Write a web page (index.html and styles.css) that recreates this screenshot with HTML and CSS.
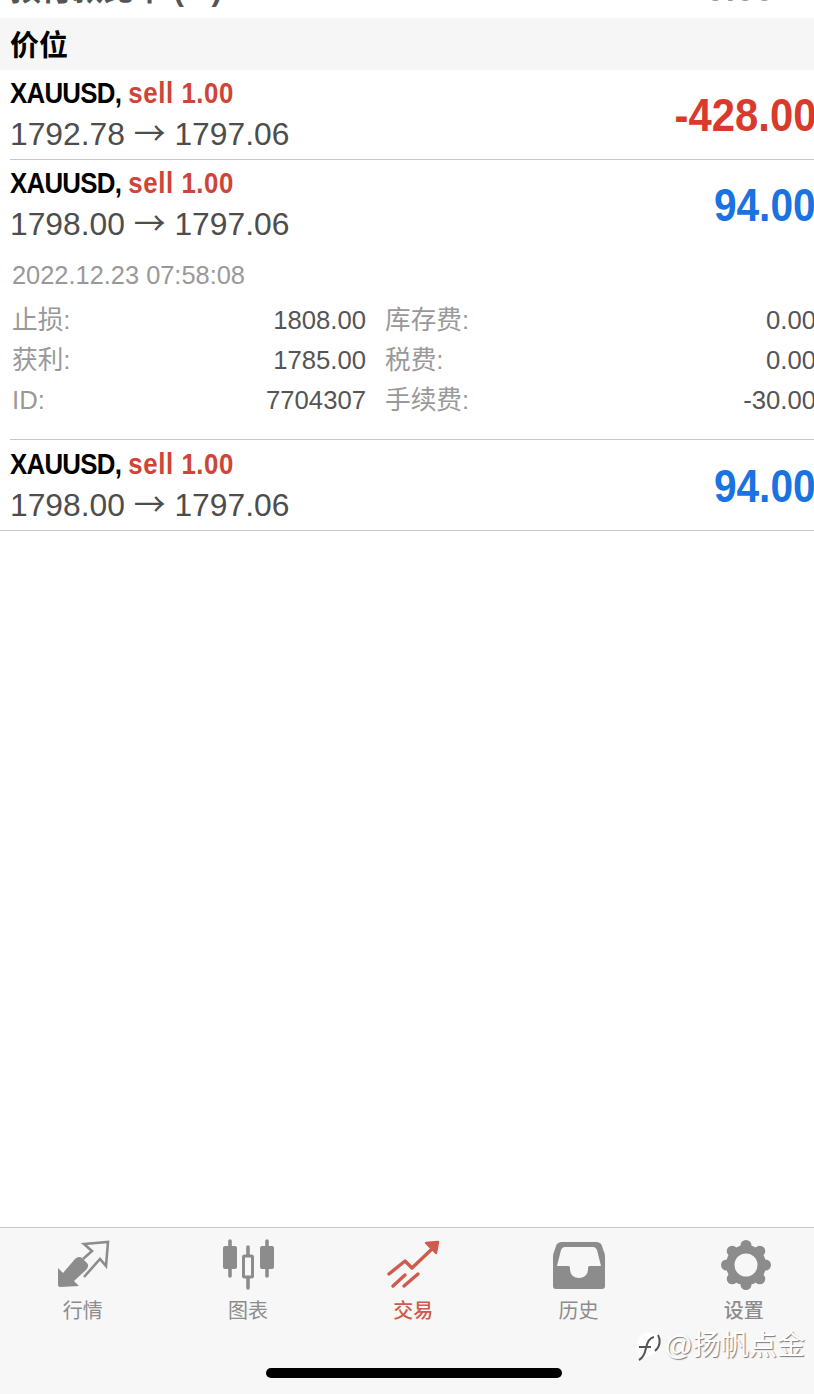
FILE: index.html
```html
<!DOCTYPE html>
<html lang="zh-CN">
<head>
    <meta charset="UTF-8">
    <meta name="viewport" content="width=device-width, initial-scale=1.0">
    <title>交易</title>
    <link rel="stylesheet" href="styles.css">
</head>
<body>
    <div class="page">
        <div class="content">
            <!-- Summary row, cut off by the top of the screen -->
            <div class="summary">
                <div class="summary-row">
                    <span>预付款比率 (%)</span>
                    <span class="summary-value">0.00</span>
                </div>
            </div>

            <div class="section-title">价位</div>

            <div class="position">
                <div class="position-main">
                    <div>
                        <div class="position-title"><span class="symbol">XAUUSD,</span> <span class="side">sell 1.00</span></div>
                        <div class="position-price">1792.78 <span class="arrow">→</span> 1797.06</div>
                    </div>
                    <div class="profit loss">-428.00</div>
                </div>
            </div>

            <div class="position">
                <div class="position-main">
                    <div>
                        <div class="position-title"><span class="symbol">XAUUSD,</span> <span class="side">sell 1.00</span></div>
                        <div class="position-price">1798.00 <span class="arrow">→</span> 1797.06</div>
                    </div>
                    <div class="profit gain">94.00</div>
                </div>
                <div class="position-details">
                    <div class="position-date">2022.12.23 07:58:08</div>
                    <div class="details-grid">
                        <span class="label">止损:</span><span class="value">1808.00</span>
                        <span class="label second">库存费:</span><span class="value">0.00</span>
                        <span class="label">获利:</span><span class="value">1785.00</span>
                        <span class="label second">税费:</span><span class="value">0.00</span>
                        <span class="label">ID:</span><span class="value">7704307</span>
                        <span class="label second">手续费:</span><span class="value">-30.00</span>
                    </div>
                </div>
            </div>

            <div class="position last">
                <div class="position-main">
                    <div>
                        <div class="position-title"><span class="symbol">XAUUSD,</span> <span class="side">sell 1.00</span></div>
                        <div class="position-price">1798.00 <span class="arrow">→</span> 1797.06</div>
                    </div>
                    <div class="profit gain">94.00</div>
                </div>
            </div>
        </div>

        <!-- Bottom tab bar -->
        <div class="tabbar">
            <div class="tab">
                <svg class="tab-icon" viewBox="0 0 64 56">
                    <path d="M7 32l5 5 12-14c2-2 5-3 7-1l5 5c2 2 1 5-1 7L23 45l5 5-19 1c-1 0-2-1-2-2z" fill="currentColor"/>
                    <path d="M32 23l9-8-8-7 24-2-2 24-6-7-16 18" fill="none" stroke="currentColor" stroke-width="2.600"/>
                </svg>
                <span>行情</span>
            </div>
            <div class="tab">
                <svg class="tab-icon" viewBox="0 0 64 56">
                    <path d="M14 5v35M51 5v35M32 11v41" fill="none" stroke="currentColor" stroke-width="3.600" stroke-linecap="round"/>
                    <rect x="7" y="10" width="14" height="23" rx="2" fill="currentColor"/>
                    <rect x="44" y="10" width="14" height="23" rx="2" fill="currentColor"/>
                    <rect x="27.500" y="20" width="9" height="21" rx="1" fill="#f7f7f7" stroke="currentColor" stroke-width="3"/>
                </svg>
                <span>图表</span>
            </div>
            <div class="tab active">
                <svg class="tab-icon" viewBox="0 0 64 56">
                    <path d="M8 38l16-13 7 7 22-21" fill="none" stroke="currentColor" stroke-width="3.400" stroke-linecap="round" stroke-linejoin="round"/>
                    <path d="M45 7l12-1-2 11z" fill="currentColor" stroke="currentColor" stroke-width="2.400" stroke-linejoin="round"/>
                    <path d="M12 50l12-11M23 50l14-12" fill="none" stroke="currentColor" stroke-width="3.400" stroke-linecap="round"/>
                </svg>
                <span>交易</span>
            </div>
            <div class="tab">
                <svg class="tab-icon" viewBox="0 0 64 56">
                    <path fill-rule="evenodd" d="M15 6h34c3 0 5 1 6 4l2 6c1 2 1 4 1 6v28c0 2-1 3-3 3H9c-2 0-3-1-3-3V22c0-2 0-4 1-6l2-6c1-3 3-4 6-4zM18 11c-2 0-3 1-4 3l-4 16h11c2 0 2 1 2 3 0 6 4 9 9 9s9-3 9-9c0-2 0-3 2-3h11l-4-16c-1-2-2-3-4-3z" fill="currentColor"/>
                </svg>
                <span>历史</span>
            </div>
            <div class="tab">
                <svg class="tab-icon" viewBox="0 0 64 56">
                    <circle cx="34" cy="29" r="15.750" fill="none" stroke="currentColor" stroke-width="8.500"/>
                    <path d="M34 9.500h0M47.800 15.200h0M53.500 29h0M47.800 42.800h0M34 48.500h0M20.200 42.800h0M14.500 29h0M20.200 15.200h0" fill="none" stroke="currentColor" stroke-width="11" stroke-linecap="round"/>
                </svg>
                <span class="tab-strong">设置</span>
            </div>
        </div>

        <div class="home-indicator"></div>

        <div class="watermark">
            <svg class="watermark-icon" viewBox="0 0 26 30">
                <path d="M5 25C0 22 0 14 2 9 4 4 9 1 15 2c7 1 10 6 9 12-1 6-5 9-10 10l-6 4z" fill="#fff"/>
                <path d="M3 29c4-2 6-7 7-12 1-5 3-10 8-11M3 16h12M22 4c3 5 2 12-3 16" fill="none" stroke="#555" stroke-width="2"/>
            </svg>
            <span>@扬帆点金</span>
        </div>
    </div>
</body>
</html>
```

FILE: styles.css
```css
/* Basic Styling */
body {
    margin: 0;
    padding: 0;
    background-color: white;
    font-family: "Liberation Sans", "Noto Sans CJK SC", sans-serif;
}

.page {
    position: relative;
    width: 814px;
    height: 1394px;
    overflow: hidden;
    display: flex;
    flex-direction: column;
}

.content {
    flex: 1;
    margin-right: -2px;
}

.summary {
    height: 18px;
    overflow: hidden;
}

.summary-row {
    display: flex;
    justify-content: space-between;
    margin-top: -28px;
    padding: 0 41px 0 10px;
    font-size: 31px;
    line-height: 36px;
    font-weight: bold;
    color: #555;
}

.summary-value {
    margin-top: 1px;
    letter-spacing: 2px;
    color: #999;
}

.section-title {
    height: 52px;
    padding-left: 10px;
    background-color: #f6f6f6;
    font-size: 29px;
    line-height: 56px;
    font-weight: bold;
    color: black;
}

.position {
    margin-left: 10px;
    border-bottom: 1px solid #c8c8c8;
}

.position.last {
    margin-left: 0;
    padding-left: 10px;
}

.position.last .position-main {
    height: 90px;
}

.position-main {
    display: flex;
    justify-content: space-between;
    align-items: center;
    height: 89px;
}

/* The app uses a condensed bold, so the Arial widths get squeezed */
.position-title {
    font-size: 30px;
    line-height: 40px;
    font-weight: bold;
    color: black;
    white-space: nowrap;
    transform: scaleX(0.86);
    transform-origin: left center;
}

.symbol {
    letter-spacing: -0.83px;
}

.side {
    letter-spacing: 0.67px;
    color: #cf4437;
}

.position-price {
    margin-top: -1px;
    font-size: 31.800px;
    line-height: 44px;
    color: #4d4d4d;
}

.arrow {
    font-family: "Noto Sans CJK SC", sans-serif;
    line-height: 1;
}

.profit {
    font-size: 47px;
    font-weight: bold;
    transform-origin: right center;
}

.loss {
    color: #d93a2b;
    transform: scaleX(0.89);
}

.gain {
    color: #1a73e0;
    transform: scaleX(0.865);
}

.position-details {
    height: 190px;
    padding-left: 2px;
}

.position-date {
    font-size: 25.400px;
    line-height: 52px;
    color: #999;
}

.details-grid {
    display: grid;
    grid-template-columns: 120px 234px 139px 1fr;
    margin-top: -1px;
    font-size: 25.700px;
    line-height: 40px;
}

.label {
    color: #999;
}

.label.second {
    padding-left: 19px;
}

.value {
    text-align: right;
    color: #555;
}

.tabbar {
    display: grid;
    grid-template-columns: repeat(5, 165.300px);
    height: 166px;
    background-color: #f7f7f7;
    border-top: 1px solid #c8c8c8;
}

.tab {
    display: flex;
    flex-direction: column;
    align-items: center;
    padding-top: 8px;
    font-size: 20px;
    line-height: 26px;
    color: #8c8c8c;
}

.tab.active {
    color: #cf5a4e;
    font-weight: 500;
}

.tab-strong {
    font-weight: 500;
}

.tab-icon {
    display: block;
    width: 64px;
    height: 56px;
    margin-bottom: 6px;
}

/* These two sit over the tab bar */
.home-indicator {
    position: absolute;
    left: 266px;
    bottom: 16px;
    width: 296px;
    height: 10px;
    border-radius: 5px;
    background-color: black;
}

.watermark {
    position: absolute;
    right: 9px;
    top: 1327px;
    display: flex;
    align-items: center;
    font-size: 28px;
    line-height: 38px;
    color: white;
    text-shadow: 1px 1px 1px rgba(0, 0, 0, 0.5);
}

.watermark-icon {
    width: 26px;
    height: 30px;
    margin-right: 3px;
}
```
